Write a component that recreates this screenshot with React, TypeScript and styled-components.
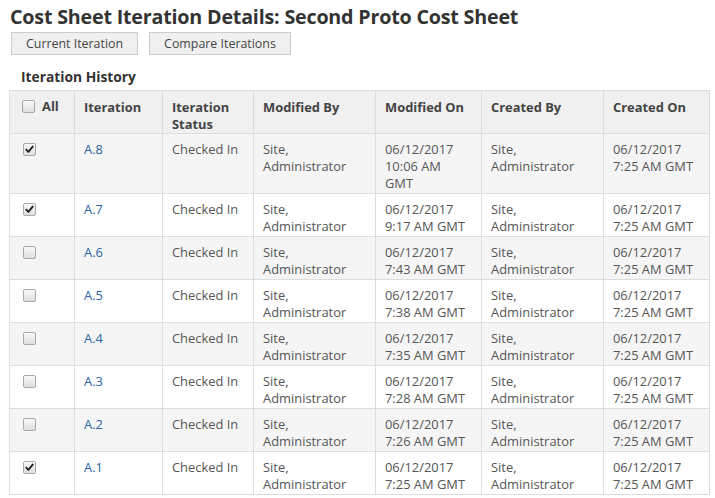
import { createGlobalStyle } from 'styled-components';
import styled from 'styled-components';

const GlobalStyle = createGlobalStyle`
  body {
    margin: 0;
    background: #ffffff;
    font-family: "Open Sans", "Noto Sans", Arial, sans-serif;
    color: #555555;
  }
`

const Page = styled.div`
  padding: 4px 0 0 9px;
`

const Title = styled.h1`
  margin: 0 0 0 1px;
  font-size: 19.7px;
  font-weight: 700;
  color: #333333;
  line-height: 26px;
  letter-spacing: -0.2px;
`

const Toolbar = styled.div`
  display: flex;
  gap: 11px;
  margin: 2px 0 0 2px;
`

const Button = styled.button`
  height: 23px;
  padding: 0 14px;
  background: #f0f0f0;
  border: 1px solid #cccccc;
  border-radius: 0;
  font-family: inherit;
  font-size: 12.4px;
  color: #444444;
  cursor: pointer;
`

const SectionTitle = styled.h2`
  margin: 13px 0 4px 12px;
  font-size: 13.8px;
  font-weight: 700;
  color: #333333;
  line-height: 18px;
`

const Table = styled.table`
  border-collapse: collapse;
  table-layout: fixed;
  width: 700px;
  font-size: 12.9px;
  border: 1px solid #dddddd;
`

const Col = styled.col<{ $w: number }>`
  width: ${p => p.$w}px;
`

const Th = styled.th`
  text-align: left;
  vertical-align: top;
  background: #f0f0f0;
  border: 1px solid #dddddd;
  padding: 8px 9px 0 9px;
  height: 34px;
  font-weight: 700;
  color: #444444;
  line-height: 17px;
  overflow: hidden;
`

const Row = styled.tr<{ $shade: boolean }>`
  background: ${p => (p.$shade ? '#f5f5f5' : '#ffffff')};
`

const Td = styled.td`
  vertical-align: top;
  border: 1px solid #dddddd;
  padding: 7px 9px 1px 9px;
  line-height: 17px;
  color: #555555;
  height: 34px;
  white-space: nowrap;
`

const CheckCell = styled(Td)`
  padding-left: 13px;
`

const Box = styled.span`
  display: inline-block;
  width: 11px;
  height: 11px;
  border: 1px solid #a9a9a9;
  border-radius: 2px;
  background: linear-gradient(#fafafa, #dedede);
  margin-top: 2px;
  position: relative;
  vertical-align: top;
`

const AllLabel = styled.span`
  display: inline-flex;
  gap: 7px;
  align-items: flex-start;
  margin-left: 3px;
  margin-top: -1px;
`

const Link = styled.a`
  color: #2a63a8;
  text-decoration: none;
`

function Check({ checked }: { checked?: boolean }) {
  return (
    <Box>
      {checked ? (
        <svg width="11" height="11" viewBox="0 0 11 11" style={{ position: 'absolute', left: 0, top: 0 }}>
          <path d="M2.3 5.6 L4.4 7.8 L8.7 2.6" stroke="#222" strokeWidth="1.9" fill="none" strokeLinecap="round" strokeLinejoin="round" />
        </svg>
      ) : null}
    </Box>
  )
}

const rows = [
  { it: 'A.8', mod: ['06/12/2017', '10:06 AM', 'GMT'], checked: true },
  { it: 'A.7', mod: ['06/12/2017', '9:17 AM GMT'], checked: true },
  { it: 'A.6', mod: ['06/12/2017', '7:43 AM GMT'], checked: false },
  { it: 'A.5', mod: ['06/12/2017', '7:38 AM GMT'], checked: false },
  { it: 'A.4', mod: ['06/12/2017', '7:35 AM GMT'], checked: false },
  { it: 'A.3', mod: ['06/12/2017', '7:28 AM GMT'], checked: false },
  { it: 'A.2', mod: ['06/12/2017', '7:26 AM GMT'], checked: false },
  { it: 'A.1', mod: ['06/12/2017', '7:25 AM GMT'], checked: true },
]

const widths = [65, 88, 91, 122, 106, 122, 106]

function Lines({ items }: { items: string[] }) {
  return <>{items.map((s, i) => <div key={i}>{s}</div>)}</>
}

function App() {
  return (
    <Page>
      <GlobalStyle />
      <Title>Cost Sheet Iteration Details: Second Proto Cost Sheet</Title>
      <Toolbar>
        <Button>Current Iteration</Button>
        <Button>Compare Iterations</Button>
      </Toolbar>
      <SectionTitle>Iteration History</SectionTitle>
      <Table>
        <colgroup>
          {widths.map((w, i) => <Col key={i} $w={w} />)}
        </colgroup>
        <thead>
          <tr>
            <Th><AllLabel><Check /> All</AllLabel></Th>
            <Th>Iteration</Th>
            <Th>Iteration Status</Th>
            <Th>Modified By</Th>
            <Th>Modified On</Th>
            <Th>Created By</Th>
            <Th>Created On</Th>
          </tr>
        </thead>
        <tbody>
          {rows.map((r, i) => (
            <Row key={r.it} $shade={i % 2 === 0}>
              <CheckCell><Check checked={r.checked} /></CheckCell>
              <Td><Link href="#">{r.it}</Link></Td>
              <Td>Checked In</Td>
              <Td><Lines items={['Site,', 'Administrator']} /></Td>
              <Td><Lines items={r.mod} /></Td>
              <Td><Lines items={['Site,', 'Administrator']} /></Td>
              <Td><Lines items={['06/12/2017', '7:25 AM GMT']} /></Td>
            </Row>
          ))}
        </tbody>
      </Table>
    </Page>
  );
}

export default App;
